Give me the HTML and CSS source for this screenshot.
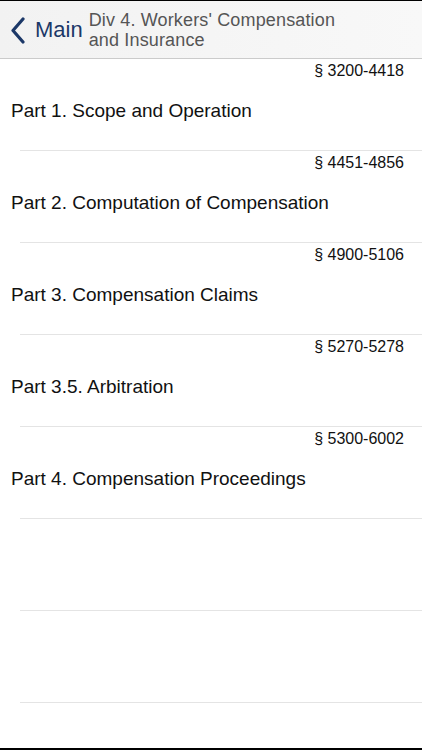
FILE: index.html
```html
<!DOCTYPE html>
<html>
<head>
<meta charset="utf-8">
<link rel="stylesheet" href="styles.css">
</head>
<body>
<div class="screen">
  <header class="nav">
    <div class="back">
      <svg class="chev" width="15" height="27" viewBox="0 0 15 27"><path d="M13 2 L3 13.5 L13 25" fill="none" stroke="#1c3868" stroke-width="3.2" stroke-linecap="round" stroke-linejoin="round"/></svg>
      <span class="back-label">Main</span>
    </div>
    <div class="title">Div 4. Workers' Compensation<br>and Insurance</div>
  </header>
  <ul class="list">
    <li class="row"><div class="sec">§ 3200-4418</div><div class="part">Part 1. Scope and Operation</div></li>
    <li class="row"><div class="sec">§ 4451-4856</div><div class="part">Part 2. Computation of Compensation</div></li>
    <li class="row"><div class="sec">§ 4900-5106</div><div class="part">Part 3. Compensation Claims</div></li>
    <li class="row"><div class="sec">§ 5270-5278</div><div class="part">Part 3.5. Arbitration</div></li>
    <li class="row"><div class="sec">§ 5300-6002</div><div class="part">Part 4. Compensation Proceedings</div></li>
    <li class="row empty"></li>
    <li class="row empty"></li>
  </ul>
</div>
</body>
</html>
```
FILE: styles.css
```css
html, body {
  margin: 0;
  padding: 0;
  background: #000;
}
body {
  width: 422px;
  height: 750px;
  overflow: hidden;
  font-family: "Liberation Sans", Arial, sans-serif;
}
.screen {
  margin-top: 1px;
  height: 747px;
  background: #fff;
  overflow: hidden;
}
.nav {
  background: linear-gradient(to right, #f2f2f2, #f8f8f8);
  border-bottom: 1px solid #cbcbcb;
  display: flex;
  align-items: center;
  box-sizing: border-box;
  height: 58px;
  padding-left: 10px;
}
.back {
  display: flex;
  align-items: center;
}
.chev {
  display: block;
  margin-top: 1px;
}
.back-label {
  margin-left: 10px;
  font-size: 22px;
  line-height: 26px;
  color: #1c3868;
}
.title {
  margin-left: 6px;
  font-size: 18px;
  line-height: 20px;
  color: #555;
  letter-spacing: 0.15px;
}
.list {
  list-style: none;
  margin: 0;
  padding: 0;
}
.row {
  position: relative;
  height: 92px;
  box-sizing: border-box;
  padding-top: 2px;
}
.row::after {
  content: "";
  position: absolute;
  left: 20px;
  right: 0;
  bottom: 0;
  height: 1px;
  background: #e4e4e4;
}
.sec {
  text-align: right;
  padding-right: 18px;
  font-size: 16px;
  line-height: 20px;
  color: #111;
}
.part {
  margin-top: 20px;
  padding-left: 11px;
  font-size: 19px;
  line-height: 20px;
  color: #111;
}
```
